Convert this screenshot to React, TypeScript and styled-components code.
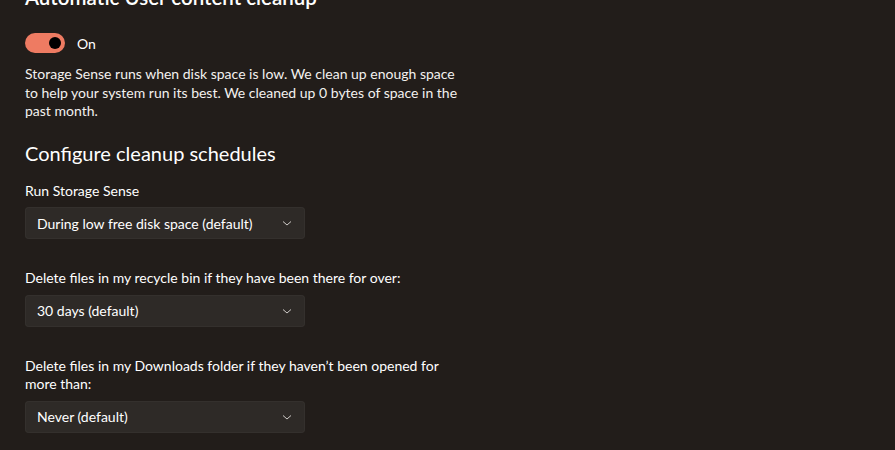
import React from 'react'
import styled, { createGlobalStyle } from 'styled-components'

const GlobalStyle = createGlobalStyle`
  html, body {
    margin: 0;
    padding: 0;
    background: #221d1a;
    overflow: hidden;
  }
  body {
    font-family: Lato, 'Noto Sans', sans-serif;
    color: #ffffff;
  }
`

const Page = styled.div`
  width: 895px;
  height: 450px;
  background: #221d1a;
  padding: 0 25px;
  box-sizing: border-box;
  overflow: hidden;
`

const Title = styled.h2`
  margin: -17px 0 0;
  font-size: 20.5px;
  line-height: 28px;
  font-weight: 600;
`

const ToggleRow = styled.div`
  display: flex;
  align-items: center;
  gap: 12px;
  margin-top: 22px;
  font-size: 14px;
`

const Track = styled.div<{ on: boolean }>`
  width: 40px;
  height: 20px;
  border-radius: 10px;
  background: ${(p) => (p.on ? '#ee7b62' : 'transparent')};
  display: flex;
  align-items: center;
  justify-content: ${(p) => (p.on ? 'flex-end' : 'flex-start')};
  padding: 0 4px;
  box-sizing: border-box;
`

const Knob = styled.div`
  width: 12px;
  height: 12px;
  border-radius: 50%;
  background: #000;
`

const Description = styled.p`
  margin: 12px 0 0;
  width: 445px;
  font-size: 14px;
  line-height: 18.5px;
  color: #f3f1ef;
`

const Section = styled.h3`
  margin: 18px 0 0;
  font-size: 20px;
  line-height: 28px;
  font-weight: 400;
`

const Field = styled.div<{ gap: number }>`
  margin-top: ${(p) => p.gap}px;
  display: flex;
  flex-direction: column;
`

const Label = styled.div`
  font-size: 14px;
  line-height: 18.5px;
  width: 440px;
  margin-bottom: 7px;
`

const Select = styled.div`
  width: 280px;
  height: 32px;
  border-radius: 4px;
  background: #2e2a27;
  box-shadow: inset 0 0 0 1px #34302d;
  display: flex;
  align-items: center;
  justify-content: space-between;
  padding: 0 12px;
  box-sizing: border-box;
  font-size: 14px;
`

const Chevron = () => (
  <svg width="12" height="12" viewBox="0 0 12 12">
    <path d="M2 4.5 L6 8 L10 4.5" fill="none" stroke="#cfcbc8" strokeWidth="1" />
  </svg>
)

const Dropdown = ({ value }: { value: string }) => (
  <Select>
    <span>{value}</span>
    <Chevron />
  </Select>
)

export default function App() {
  return (
    <>
      <GlobalStyle />
      <Page>
        <Title>Automatic User content cleanup</Title>
        <ToggleRow>
          <Track on>
            <Knob />
          </Track>
          <span>On</span>
        </ToggleRow>
        <Description>
          Storage Sense runs when disk space is low. We clean up enough space to help your system
          run its best. We cleaned up 0 bytes of space in the past month.
        </Description>
        <Section>Configure cleanup schedules</Section>
        <Field gap={15}>
          <Label>Run Storage Sense</Label>
          <Dropdown value="During low free disk space (default)" />
        </Field>
        <Field gap={30}>
          <Label>Delete files in my recycle bin if they have been there for over:</Label>
          <Dropdown value="30 days (default)" />
        </Field>
        <Field gap={30}>
          <Label>Delete files in my Downloads folder if they haven’t been opened for more than:</Label>
          <Dropdown value="Never (default)" />
        </Field>
      </Page>
    </>
  )
}
